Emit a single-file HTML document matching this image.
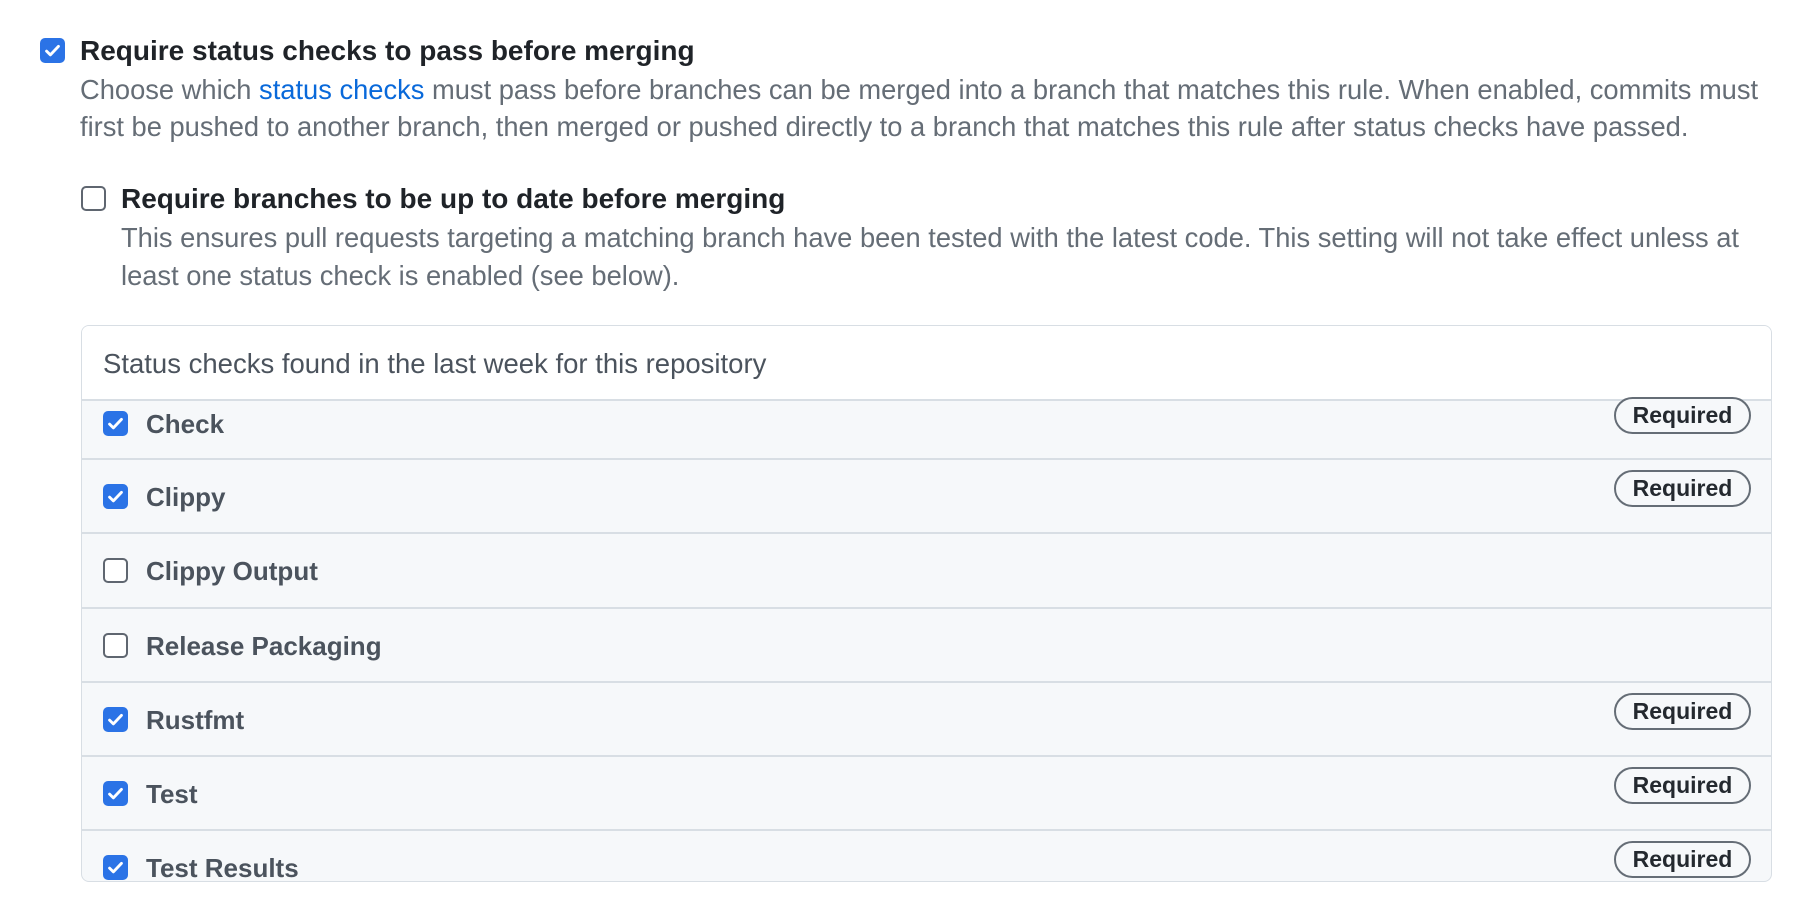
<!DOCTYPE html>
<html><head><meta charset="utf-8"><style>
*{box-sizing:border-box;margin:0;padding:0}
body{width:1804px;height:910px;background:#fff;font-family:"Liberation Sans",Arial,sans-serif;position:relative;overflow:hidden;color:#1f2328}
.a{position:absolute;white-space:nowrap}
.cb{position:absolute;width:25px;height:25px;border-radius:5px}
.on{background:#2b73e6}
.on svg{position:absolute;left:3px;top:3px}
.off{border:2px solid #5f6670;background:#fff}
.t{font-weight:bold;font-size:28px;line-height:30px}
.d{font-size:27.3px;color:#656d76;line-height:38px}
.box{position:absolute;left:81px;top:325px;width:1691px;height:557px;border:1.5px solid #d8dee4;border-radius:8px;overflow:hidden;background:#f6f8fa}
.hd{position:absolute;left:0;top:0;right:0;height:75px;background:#fff;border-bottom:2px solid #d8dee4}
.row{position:absolute;left:0;right:0;border-bottom:2px solid #d8dee4}
.rt{position:absolute;left:64px;font-size:26px;font-weight:bold;color:#4b535d;line-height:30px}
.pill{position:absolute;left:1532px;width:137px;height:37px;border:2px solid #656d76;border-radius:19px;font-size:23px;font-weight:bold;color:#24292f;text-align:center;line-height:33px;background:#f6f8fa}
</style></head><body>
<div class="cb on" style="left:40px;top:38px"><svg width="19" height="19" viewBox="0 0 16 16"><path d="M3 8.5l3.2 3.2L13 4.5" fill="none" stroke="#fff" stroke-width="2.4" stroke-linecap="round" stroke-linejoin="round"/></svg></div>
<div class="a t" style="left:80px;top:36px">Require status checks to pass before merging</div>
<div class="a d" style="left:80px;top:71px">Choose which <span style="color:#0969da">status checks</span> must pass before branches can be merged into a branch that matches this rule. When enabled, commits must</div>
<div class="a d" style="left:80px;top:108px">first be pushed to another branch, then merged or pushed directly to a branch that matches this rule after status checks have passed.</div>
<div class="cb off" style="left:81px;top:186px"></div>
<div class="a t" style="left:121px;top:184px">Require branches to be up to date before merging</div>
<div class="a d" style="left:121px;top:219px">This ensures pull requests targeting a matching branch have been tested with the latest code. This setting will not take effect unless at</div>
<div class="a d" style="left:121px;top:257px">least one status check is enabled (see below).</div>
<div class="box">
<div class="hd"><div class="a" style="left:21px;top:22px;font-size:27.5px;color:#4b535d">Status checks found in the last week for this repository</div></div>
<div class="row" style="top:75px;height:59px"><div class="cb on" style="left:21px;top:10px"><svg width="19" height="19" viewBox="0 0 16 16"><path d="M3 8.5l3.2 3.2L13 4.5" fill="none" stroke="#fff" stroke-width="2.4" stroke-linecap="round" stroke-linejoin="round"/></svg></div><div class="rt" style="top:8px">Check</div><div class="pill" style="top:-4px">Required</div></div>
<div class="row" style="top:134px;height:74px"><div class="cb on" style="left:21px;top:24px"><svg width="19" height="19" viewBox="0 0 16 16"><path d="M3 8.5l3.2 3.2L13 4.5" fill="none" stroke="#fff" stroke-width="2.4" stroke-linecap="round" stroke-linejoin="round"/></svg></div><div class="rt" style="top:22px">Clippy</div><div class="pill" style="top:10px">Required</div></div>
<div class="row" style="top:208px;height:75px"><div class="cb off" style="left:21px;top:24px"></div><div class="rt" style="top:22px">Clippy Output</div></div>
<div class="row" style="top:283px;height:74px"><div class="cb off" style="left:21px;top:24px"></div><div class="rt" style="top:22px">Release Packaging</div></div>
<div class="row" style="top:357px;height:74px"><div class="cb on" style="left:21px;top:24px"><svg width="19" height="19" viewBox="0 0 16 16"><path d="M3 8.5l3.2 3.2L13 4.5" fill="none" stroke="#fff" stroke-width="2.4" stroke-linecap="round" stroke-linejoin="round"/></svg></div><div class="rt" style="top:22px">Rustfmt</div><div class="pill" style="top:10px">Required</div></div>
<div class="row" style="top:431px;height:74px"><div class="cb on" style="left:21px;top:24px"><svg width="19" height="19" viewBox="0 0 16 16"><path d="M3 8.5l3.2 3.2L13 4.5" fill="none" stroke="#fff" stroke-width="2.4" stroke-linecap="round" stroke-linejoin="round"/></svg></div><div class="rt" style="top:22px">Test</div><div class="pill" style="top:10px">Required</div></div>
<div class="row" style="top:505px;height:74px;border-bottom:none"><div class="cb on" style="left:21px;top:24px"><svg width="19" height="19" viewBox="0 0 16 16"><path d="M3 8.5l3.2 3.2L13 4.5" fill="none" stroke="#fff" stroke-width="2.4" stroke-linecap="round" stroke-linejoin="round"/></svg></div><div class="rt" style="top:22px">Test Results</div><div class="pill" style="top:10px">Required</div></div>
</div>
</body></html>
